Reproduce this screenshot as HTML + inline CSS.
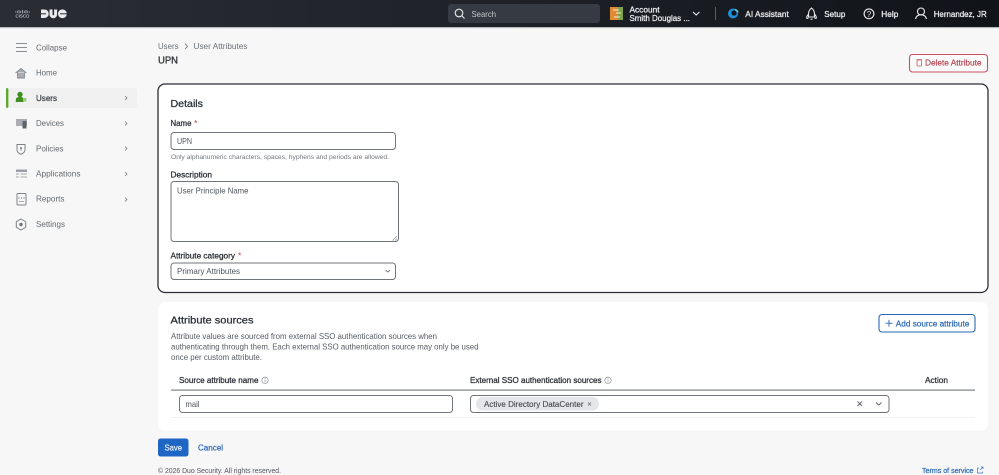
<!DOCTYPE html>
<html lang="en"><head><meta charset="utf-8"><title>UPN</title>
<style>
html,body{margin:0;padding:0;width:999px;height:475px;overflow:hidden;background:#f7f7f7}
svg{display:block;filter:blur(.3px)}
text{font-family:"Liberation Sans",sans-serif;font-size:8.5px;fill:#4a4f57}
.b{font-weight:400;stroke:currentColor;stroke-width:.22px}
.n{fill:#2d3138;stroke:#2d3138;stroke-width:.28px}
.w{fill:#eef0f2;stroke:#eef0f2;stroke-width:.25px}
.ic{fill:none;stroke:#7c828a;stroke-width:1}
.ih{fill:none;stroke:#e8eaec;stroke-width:1.1}
</style></head><body>
<svg width="999" height="475" viewBox="0 0 999 475" xmlns="http://www.w3.org/2000/svg">
<defs><linearGradient id="g" x1="0" x2="1" y1="0" y2="0"><stop offset="0" stop-color="#2a2e34"/><stop offset=".5" stop-color="#1e2228"/><stop offset="1" stop-color="#101318"/></linearGradient></defs>
<rect width="999" height="475" fill="#f7f7f7"/>
<rect width="999" height="27.500" fill="url(#g)"/>
<rect y="27" width="999" height="1.200" fill="#b9bcbf"/>

<!-- logo -->
<g stroke="#e4e6e8" stroke-width=".6"><path d="M15.500 11.500v1M17.200 10.800v2.200M19 10v3.500M20.800 10.800v2.200M22.500 10v3.500M24.200 10.800v2.200M26 10v3.500M27.800 10.800v2.200M29.500 11.500v1"/></g>
<text x="15.500" y="17.500" style="fill:#e4e6e8;font-size:4.500px" textLength="14" lengthAdjust="spacingAndGlyphs">CISCO</text>
<path d="M41 9.500h3.500a4.250 4.250 0 0 1 0 8.500H41zM49.500 9.500h3v5a.8.8 0 0 0 1.600 0v-5h3v5a3.800 3.800 0 0 1-7.600 0zM58 13.750a4.400 4.400 0 1 1 8.800 0a4.400 4.400 0 1 1-8.800 0z" fill="#e9ebed"/>
<rect x="41" y="13.300" width="5" height="1" fill="#2a2e34"/><rect x="60" y="13.300" width="7" height="1" fill="#2a2e34"/>

<!-- search -->
<rect x="448" y="4" width="152" height="19" rx="3" fill="#363a42"/>
<circle cx="459" cy="13" r="3.800" class="ih"/><path d="M462 16l2.500 2.500" class="ih"/>
<text x="471.500" y="16.800" textLength="24.500" lengthAdjust="spacingAndGlyphs" style="fill:#c4c7cb">Search</text>

<!-- account -->
<rect x="610" y="7" width="13" height="13" fill="#7fa34a"/><rect x="610" y="7" width="8" height="13" fill="#e08a32"/><path d="M613 10h6M616 13h5M614 17h6" stroke="#f5f0d8" stroke-width="1.100"/>
<text x="629.500" y="12.300" class="w" textLength="30" lengthAdjust="spacingAndGlyphs">Account</text>
<text x="629.500" y="20.800" class="w" textLength="60.500" lengthAdjust="spacingAndGlyphs">Smith Douglas ...</text>
<path d="M693 12l3.200 3 3.200-3" class="ih"/>
<rect x="715" y="7" width=".8" height="13" fill="#6a6e74"/>
<circle cx="733" cy="13.500" r="5" fill="#1d8fd8"/><circle cx="734" cy="13" r="2.600" fill="#10151c"/><path d="M735 9.500a4 4 0 0 1 3 3" stroke="#7fd3e8" stroke-width="1.200" fill="none"/>
<text x="745.300" y="16.800" class="w" textLength="43.500" lengthAdjust="spacingAndGlyphs">AI Assistant</text>
<path d="M811.500 8c2.300 1.800 3 3.800 3 6v3h-6v-3c0-2.200.7-4.200 3-6zM808.500 14l-1.700 2.500v1.800h1.700M814.500 14l1.700 2.500v1.800h-1.700M810.500 19.200h2" class="ih"/>
<text x="824.300" y="16.800" class="w" textLength="21" lengthAdjust="spacingAndGlyphs">Setup</text>
<circle cx="869" cy="13.800" r="4.900" class="ih"/>
<text x="866.800" y="16.800" style="fill:#e8eaec;font-size:8px">?</text>
<text x="881.300" y="16.800" class="w" textLength="17" lengthAdjust="spacingAndGlyphs">Help</text>
<circle cx="921" cy="11.500" r="3.500" class="ih"/><path d="M915.500 19c.8-3 2.800-4.300 5.500-4.300s4.700 1.300 5.500 4.300" class="ih"/>
<text x="933.700" y="16.800" class="w" textLength="53" lengthAdjust="spacingAndGlyphs">Hernandez, JR</text>

<!-- sidebar -->
<rect x="6" y="88" width="131" height="20" rx="3" fill="#f0f0f1"/>
<rect x="6" y="88" width="2.400" height="20" rx="1.200" fill="#5fa82d"/>
<path d="M16 43.500h11M16 47.500h11M16 51.500h11" stroke="#8a8f96" stroke-width="1"/>
<text x="36" y="50.300" textLength="31" lengthAdjust="spacingAndGlyphs" style="fill:#64696f">Collapse</text>
<path d="M15.500 73l5.500-4.500 5.500 4.500M17.500 72.500v5.500h7v-5.500" fill="#a9adb2" stroke="#8a8f96" stroke-width=".9"/>
<text x="36" y="75.500" textLength="21" lengthAdjust="spacingAndGlyphs" style="fill:#64696f">Home</text>
<circle cx="20" cy="94.500" r="2.700" fill="#3f8f1f"/><path d="M15.800 102v-2.500c0-1.500 1.500-2.500 4.200-2.500s3.700 1 3.700 2.500v2.500z" fill="#3f8f1f"/><rect x="23" y="98" width="3.500" height="3.500" fill="#9dcc7d"/>
<text x="36" y="100.800" class="b" textLength="21" lengthAdjust="spacingAndGlyphs" style="fill:#3b4047;color:#3b4047">Users</text>
<rect x="16" y="119" width="11" height="7" fill="#a9adb2"/><rect x="22.500" y="121" width="4" height="7.500" fill="#5d6269"/>
<text x="36" y="126" textLength="28" lengthAdjust="spacingAndGlyphs" style="fill:#64696f">Devices</text>
<path d="M17 144.500h8v5c0 2.500-2 4-4 4.800-2-.8-4-2.300-4-4.800z" class="ic"/><circle cx="21" cy="148" r="1" fill="#7c828a"/><path d="M21 148v2.500" stroke="#7c828a"/>
<text x="36" y="151.300" textLength="27.500" lengthAdjust="spacingAndGlyphs" style="fill:#64696f">Policies</text>
<rect x="16" y="169.500" width="11" height="2.500" fill="#9ba0a6"/><path d="M16 174h3M16 177h3M20.500 174h6.500M20.500 177h6.500" stroke="#a4a8ad"/>
<text x="36" y="176.500" textLength="44.500" lengthAdjust="spacingAndGlyphs" style="fill:#64696f">Applications</text>
<rect x="17" y="193.500" width="9" height="11.500" rx="1" class="ic"/><path d="M19 197v2M21.500 197v2M24 197v2M19 201.500h5" stroke="#8a8f96" stroke-width=".8"/>
<text x="36" y="201.700" textLength="28.500" lengthAdjust="spacingAndGlyphs" style="fill:#64696f">Reports</text>
<path d="M21 219l4.700 2.750v5.500L21 230l-4.700-2.750v-5.500z" class="ic"/><circle cx="21" cy="224.500" r="1.700" fill="#6f747b"/>
<text x="36" y="227" textLength="29" lengthAdjust="spacingAndGlyphs" style="fill:#64696f">Settings</text>
<path d="M125 96l2 2-2 2M125 121.500l2 2-2 2M125 146.500l2 2-2 2M125 172l2 2-2 2M125 197.500l2 2-2 2" fill="none" stroke="#777c83" stroke-width=".8"/>

<!-- header -->
<text x="158" y="49" textLength="20.500" lengthAdjust="spacingAndGlyphs" style="fill:#6b7077">Users</text>
<path d="M185 43.500l2.500 2.800-2.500 2.800" fill="none" stroke="#6b7077" stroke-width=".8"/>
<text x="193.500" y="49" textLength="54" lengthAdjust="spacingAndGlyphs" style="fill:#6b7077">User Attributes</text>
<text x="158" y="63.300" class="n" style="font-size:10px" textLength="20" lengthAdjust="spacingAndGlyphs">UPN</text>
<rect x="909.500" y="54.500" width="78" height="17.500" rx="3" fill="#fbfbfb" stroke="#c9505c" stroke-width="1.100"/>
<rect x="917" y="60" width="4.500" height="6" rx=".6" fill="none" stroke="#cf7b84"/><path d="M916.500 59.500h5.500" stroke="#cf7b84"/>
<text x="925" y="65.500" class="b" textLength="56.500" lengthAdjust="spacingAndGlyphs" style="fill:#b84a55;color:#b84a55">Delete Attribute</text>

<!-- details card -->
<rect x="158" y="84" width="830" height="208.500" rx="7" fill="#fff" stroke="#2c2f34" stroke-width="1.300"/>
<text x="170.500" y="106.800" class="n" style="font-size:10px" textLength="32.500" lengthAdjust="spacingAndGlyphs">Details</text>
<text x="170.500" y="126" class="n" textLength="21" lengthAdjust="spacingAndGlyphs">Name</text>
<text x="194" y="126" style="fill:#c8333f">*</text>
<rect x="171" y="132.500" width="224.500" height="17" rx="3" fill="#fff" stroke="#70757c" stroke-width="1"/>
<text x="177" y="144" textLength="15" lengthAdjust="spacingAndGlyphs" style="fill:#50555c">UPN</text>
<text x="171" y="158.800" style="font-size:6.800px;fill:#72777e" textLength="218" lengthAdjust="spacingAndGlyphs">Only alphanumeric characters, spaces, hyphens and periods are allowed.</text>
<text x="170.500" y="177.300" class="n" textLength="41.500" lengthAdjust="spacingAndGlyphs">Description</text>
<rect x="171" y="181.500" width="227.500" height="60" rx="3" fill="#fff" stroke="#70757c" stroke-width="1"/>
<text x="177" y="193.500" textLength="71.500" lengthAdjust="spacingAndGlyphs" style="fill:#50555c">User Principle Name</text>
<path d="M397 236l-4.500 4.500M397 238.500l-2 2" stroke="#8a8f96" stroke-width=".7"/>
<text x="170.500" y="258.700" class="n" textLength="64.500" lengthAdjust="spacingAndGlyphs">Attribute category</text>
<text x="238" y="258.700" style="fill:#c8333f">*</text>
<rect x="171" y="263" width="224.500" height="16.500" rx="3" fill="#fff" stroke="#70757c" stroke-width="1"/>
<text x="177" y="274" textLength="63" lengthAdjust="spacingAndGlyphs" style="fill:#50555c">Primary Attributes</text>
<path d="M385.500 270l2.300 2 2.300-2" fill="none" stroke="#70757c" stroke-width=".9"/>

<!-- sources card -->
<rect x="158" y="302" width="830" height="128.500" rx="7" fill="#fff"/>
<text x="170.500" y="323.500" class="n" style="font-size:10px" textLength="83" lengthAdjust="spacingAndGlyphs">Attribute sources</text>
<text x="171" y="339" textLength="266" lengthAdjust="spacingAndGlyphs" style="fill:#565b62">Attribute values are sourced from external SSO authentication sources when</text>
<text x="171" y="349.500" textLength="307.500" lengthAdjust="spacingAndGlyphs" style="fill:#565b62">authenticating through them. Each external SSO authentication source may only be used</text>
<text x="171" y="360" textLength="91" lengthAdjust="spacingAndGlyphs" style="fill:#565b62">once per custom attribute.</text>
<rect x="879" y="314.500" width="96" height="17.500" rx="3" fill="#fff" stroke="#2a67b5" stroke-width="1.100"/>
<path d="M885.500 323.300h7M889 319.800v7" stroke="#3a74bd" stroke-width="1"/>
<text x="895.800" y="326.500" class="b" textLength="73.500" lengthAdjust="spacingAndGlyphs" style="fill:#2a67b5;color:#2a67b5">Add source attribute</text>

<text x="179" y="383" class="n" textLength="79.500" lengthAdjust="spacingAndGlyphs">Source attribute name</text>
<circle cx="265" cy="380.300" r="3.200" fill="none" stroke="#777c83" stroke-width=".6"/><path d="M265 379.500v2.700M265 378v.7" stroke="#777c83" stroke-width=".6"/>
<text x="470" y="383" class="n" textLength="131.500" lengthAdjust="spacingAndGlyphs">External SSO authentication sources</text>
<circle cx="608" cy="380.300" r="3.200" fill="none" stroke="#777c83" stroke-width=".6"/><path d="M608 379.500v2.700M608 378v.7" stroke="#777c83" stroke-width=".6"/>
<text x="925" y="383" class="n" textLength="23" lengthAdjust="spacingAndGlyphs">Action</text>
<rect x="171" y="389.500" width="804" height="1.200" fill="#7c8087"/>
<rect x="179.500" y="395.500" width="273" height="17" rx="3" fill="#fff" stroke="#70757c" stroke-width="1"/>
<text x="185.500" y="407" textLength="14" lengthAdjust="spacingAndGlyphs" style="fill:#50555c">mail</text>
<rect x="470.500" y="395.500" width="418.500" height="17" rx="3" fill="#fff" stroke="#70757c" stroke-width="1"/>
<rect x="476" y="397" width="123" height="13.500" rx="6.700" fill="#e4e6ea"/>
<text x="484" y="407" textLength="99.500" lengthAdjust="spacingAndGlyphs" class="b" style="fill:#43484f;color:#43484f;stroke-width:.12px">Active Directory DataCenter</text>
<path d="M588 402.500l3 3M591 402.500l-3 3" stroke="#70757c" stroke-width=".8"/>
<path d="M857.500 401.500l4.500 4.500M862 401.500l-4.500 4.500" stroke="#5f646b" stroke-width=".9"/>
<path d="M876 402.500l2.800 2.500 2.800-2.500" fill="none" stroke="#5f646b" stroke-width=".9"/>
<rect x="171" y="417" width="804" height=".8" fill="#eceded"/>

<!-- footer -->
<rect x="158" y="438.500" width="30.500" height="18" rx="2.500" fill="#1f66c4"/>
<text x="164.500" y="450.700" class="b" textLength="17.500" lengthAdjust="spacingAndGlyphs" style="fill:#e8eff8;color:#e8eff8">Save</text>
<text x="198" y="450.700" class="b" textLength="25" lengthAdjust="spacingAndGlyphs" style="fill:#2a67b5;color:#2a67b5">Cancel</text>
<text x="158" y="472.800" style="font-size:7px;fill:#50555c" textLength="123" lengthAdjust="spacingAndGlyphs">© 2026 Duo Security. All rights reserved.</text>
<text x="922" y="472.800" class="b" style="font-size:7px;fill:#2f6cb5;color:#2f6cb5" textLength="51.500" lengthAdjust="spacingAndGlyphs">Terms of service</text>
<path d="M979 468h-1.500v5h5v-1.500M980 470l3-3M981 467h2v2" fill="none" stroke="#3a74bd" stroke-width=".7"/>
</svg>
</body></html>
